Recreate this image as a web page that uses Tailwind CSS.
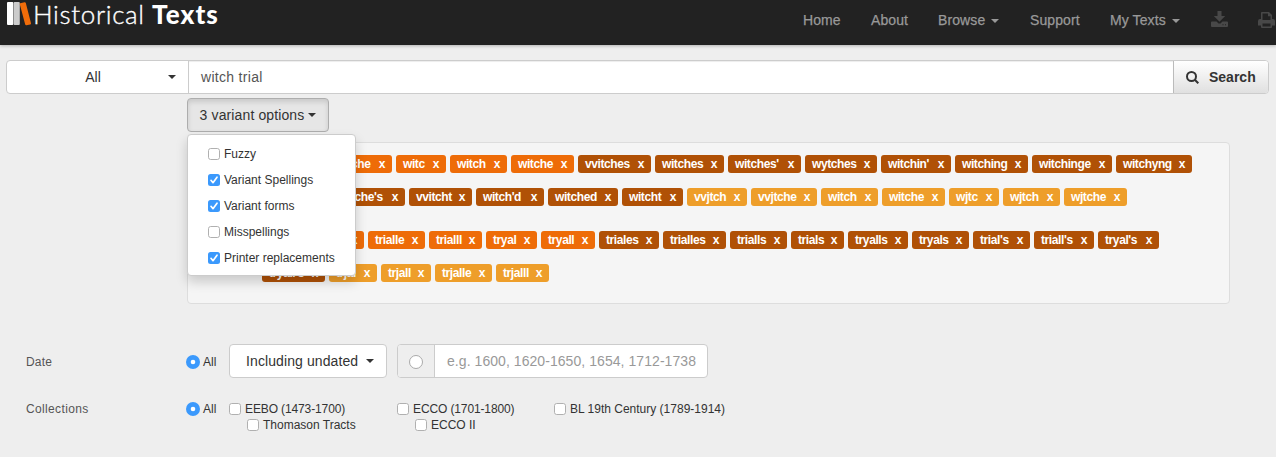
<!DOCTYPE html>
<html lang="en">
<head>
<meta charset="utf-8">
<title>Historical Texts</title>
<script src="https://cdn.jsdelivr.net/npm/@tailwindcss/browser@4"></script>
</head>
<body class="w-[1276px] h-[457px] overflow-hidden bg-[#eee] text-[#333] font-['Liberation_Sans',Arial,sans-serif] text-[12px] leading-[18px]">
<svg class="hidden">
  <symbol id="caret" viewBox="0 0 8 4"><path d="M0 0h8L4 4z" fill="currentColor"/></symbol>
  <symbol id="on" viewBox="0 0 12 12"><rect width="12" height="12" rx="2.5" fill="#3b99fc"/><path d="M3 6.3 5 8.7 9 3.2" fill="none" stroke="#fff" stroke-width="1.7" stroke-linecap="round" stroke-linejoin="round"/></symbol>
  <symbol id="off" viewBox="0 0 12 12"><rect x=".5" y=".5" width="11" height="11" rx="2.2" fill="#fff" stroke="#b0b0b0"/></symbol>
  <symbol id="radio" viewBox="0 0 14 14"><circle cx="7" cy="7" r="7" fill="#3b99fc"/><circle cx="7" cy="7" r="2.3" fill="#fff"/></symbol>
</svg>

<header class="h-[45px] bg-[#222] shadow-[0_1px_3px_rgba(0,0,0,0.25)] flex justify-between">
  <a class="flex items-start pl-[7px] text-white">
    <svg class="w-[25px] h-[24px] mt-[2px] shrink-0" viewBox="0 0 25 24"><rect width="6.3" height="23" rx="1" fill="#fff"/><rect x="6.6" width="6.2" height="23" rx="1" fill="#ccc"/><path d="M13.2 1.3 17.5.2Q18.5 0 18.8 1L24 21.3Q24.2 22.2 23.3 22.4L19.4 23.3Q18.5 23.4 18.2 22.5L12.8 2.2Q12.7 1.5 13.2 1.3Z" fill="#f06c0a"/></svg>
    <span class="flex pl-[1px] font-['Lato'] text-[26px] leading-[29px] whitespace-nowrap"><span class="w-[119px] font-light tracking-[0.65px] [-webkit-text-stroke:0.35px_white]">Historical</span><span class="font-black tracking-[1.1px]">Texts</span></span>
  </a>
  <nav class="flex items-start pt-[11px] text-[#999] text-[14px] leading-[18px] whitespace-nowrap tracking-[0.1px] [-webkit-text-stroke:0.25px_#999]">
    <a class="w-[68px]">Home</a>
    <a class="w-[67px]">About</a>
    <a class="w-[92px] flex items-center gap-[6px]">Browse <svg class="w-[8px] h-[4px] mt-px"><use href="#caret"/></svg></a>
    <a class="w-[80px]">Support</a>
    <a class="w-[101px] flex items-center gap-[6px]">My Texts <svg class="w-[8px] h-[4px] mt-px"><use href="#caret"/></svg></a>
    <svg class="w-[17px] h-[16px] mr-[30px]" viewBox="0 0 17 16" fill="#484848" stroke="none"><path d="M6.5 0h4v5h3.7L8.5 10.8 2.800 5h3.700z"/><path fill-rule="evenodd" d="M1 10.500h4.500l2 2h2l2-2H16q1 0 1 1V15q0 1-1 1H1q-1 0-1-1v-3.500q0-1 1-1zM11.500 13.200v1h1v-1zM14 13.200v1h1v-1z"/></svg>
    <svg class="w-[17px] h-[17px] mt-px mr-px" viewBox="0 0 17 17" fill="#484848"><path fill-rule="evenodd" d="M3 7V.8Q3 0 3.800 0H11l3 3v4h1q2 0 2 2v4.500h-3V15q0 1-1 1H4q-1 0-1-1v-1.500H0V9q0-2 2-2zM4.500 1.400V8h8V4.200H10V1.400zM4.500 11.500v3h8v-3z"/></svg>
  </nav>
</header>

<main>
  <form class="flex mt-[15px] ml-[6px] w-[1263px] h-[34px] border border-[#ccc] rounded-[4px] bg-white text-[14px] leading-[32px] overflow-hidden">
    <div class="w-[182px] border-r border-[#ccc] flex items-center pr-[12px]"><span class="flex-1 text-center pl-[11px]">All</span><svg class="w-[8px] h-[4px]"><use href="#caret"/></svg></div>
    <div class="flex-1 pl-[12px] text-[#555] tracking-[0.3px] shadow-[inset_0_1px_1px_rgba(0,0,0,0.075)]">witch trial</div>
    <button class="w-[95px] border-l border-[#bbb] bg-linear-to-b from-white to-[#e0e0e0] font-bold flex items-center pl-[12px] gap-[10px]"><svg class="w-[13px] h-[13px]" viewBox="0 0 13 13" fill="none" stroke="#333" stroke-width="2"><circle cx="5.500" cy="5.500" r="4.500"/><path d="m8.800 8.800 3.500 3.500"/></svg>Search</button>
  </form>

  <section class="relative ml-[187px] mt-[4px]">
    <button class="flex items-center justify-center gap-[4px] w-[142px] h-[34px] rounded-[4px] border border-[#adadad] bg-[#e6e6e6] shadow-[inset_0_3px_5px_rgba(0,0,0,0.125)] text-[14px] tracking-[0.12px] whitespace-nowrap">3 variant options <svg class="w-[8px] h-[4px]"><use href="#caret"/></svg></button>
    <div class="absolute z-10 left-0 top-[36px] w-[169px] h-[142px] bg-white border border-[#ccc] rounded-[4px] shadow-[0_6px_12px_rgba(0,0,0,0.175)] pl-[20px] pt-[6px] leading-[26px]">
      <label class="flex items-center gap-[4px]"><svg class="w-[12px] h-[12px]"><use href="#off"/></svg>Fuzzy</label>
      <label class="flex items-center gap-[4px]"><svg class="w-[12px] h-[12px]"><use href="#on"/></svg>Variant Spellings</label>
      <label class="flex items-center gap-[4px]"><svg class="w-[12px] h-[12px]"><use href="#on"/></svg>Variant forms</label>
      <label class="flex items-center gap-[4px]"><svg class="w-[12px] h-[12px]"><use href="#off"/></svg>Misspellings</label>
      <label class="flex items-center gap-[4px]"><svg class="w-[12px] h-[12px]"><use href="#on"/></svg>Printer replacements</label>
    </div>
    <div class="mt-[10px] w-[1043px] h-[162px] rounded-[4px] border border-[#ddd] bg-[#f5f5f5] pl-[74px] pt-[12px] text-white font-bold text-[12px] leading-[18px]" id="tags"></div>
  </section>

  <section class="flex items-center mt-[40px] pl-[26px] h-[34px]">
    <div class="w-[160px] text-[#555] tracking-[0.2px] pt-px">Date</div>
    <label class="w-[43px] flex items-center gap-[3px] pt-[2px]"><svg class="w-[14px] h-[14px]"><use href="#radio"/></svg>All</label>
    <div class="w-[158px] h-[34px] bg-white border border-[#ccc] rounded-[4px] flex items-center justify-between pl-[16px] pr-[12px] text-[14px] tracking-[0.1px]">Including undated<svg class="w-[8px] h-[4px]"><use href="#caret"/></svg></div>
    <div class="ml-[10px] w-[311px] h-[34px] flex border border-[#ccc] rounded-[4px] bg-white overflow-hidden text-[14px] leading-[32px] text-[#999]">
      <div class="w-[37px] bg-[#eee] border-r border-[#ccc] flex items-center pl-[11px] pt-[2px]"><span class="w-[14px] h-[14px] rounded-full bg-white border border-[#aaa]"></span></div>
      <span class="pl-[12px] tracking-[0.06px]">e.g. 1600, 1620-1650, 1654, 1712-1738</span>
    </div>
  </section>

  <section class="flex pl-[26px] mt-[22px] leading-[16px] whitespace-nowrap">
    <div class="w-[160px] text-[#555] tracking-[0.35px] pt-px">Collections</div>
    <label class="w-[43px] h-[18px] flex items-center gap-[3px]"><svg class="w-[14px] h-[14px]"><use href="#radio"/></svg>All</label>
    <div class="w-[168px] pt-px">
      <label class="flex items-center gap-[4px] tracking-[-0.12px]"><svg class="w-[12px] h-[12px]"><use href="#off"/></svg>EEBO (1473-1700)</label>
      <label class="flex items-center gap-[4px] pl-[18px]"><svg class="w-[12px] h-[12px]"><use href="#off"/></svg>Thomason Tracts</label>
    </div>
    <div class="w-[157px] pt-px">
      <label class="flex items-center gap-[4px] tracking-[-0.12px]"><svg class="w-[12px] h-[12px]"><use href="#off"/></svg>ECCO (1701-1800)</label>
      <label class="flex items-center gap-[4px] pl-[18px]"><svg class="w-[12px] h-[12px]"><use href="#off"/></svg>ECCO II</label>
    </div>
    <div class="pt-px">
      <label class="flex items-center gap-[4px]"><svg class="w-[12px] h-[12px]"><use href="#off"/></svg>BL 19th Century (1789-1914)</label>
    </div>
  </section>
</main>

<script>
const colours = { o: 'bg-[#ee6c08]', b: 'bg-[#b05106]', y: 'bg-[#ee9e2a]' };
const rows = [
  ['mb-[15px]', 'o vvitch 59|o vvitche 67|o witc 50|o witch 57|o witche 63|b vvitches 73|b witches 69|b witches\' 73|b wytches 72|b witchin\' 70|b witching 73|b witchinge 80|b witchyng 76'],
  ['mb-[25px]', 'b wytched 66|b witche\'s 73|b vvitcht 63|b witch\'d 68|b witched 70|b witcht 61|y vvjtch 60|y vvjtche 66|y witch 57|y witche 63|y wjtc 50|y wjtch 57|y wjtche 63'],
  ['mb-[15px]', 'o trial 47|o triall 51|o trialle 57|o trialll 53|o tryal 51|o tryall 54|b triales 60|b trialles 63|b trialls 57|b trials 53|b tryalls 60|b tryals 57|b trial\'s 57|b triall\'s 60|b tryal\'s 61'],
  ['mb-0', 'b tryall\'s 63|y trjal 48|y trjall 50|y trjalle 57|y trjalll 53'],
];
for (const [margin, list] of rows) {
  const row = document.createElement('div');
  row.className = 'flex gap-[4px] ' + margin;
  for (const item of list.split('|')) {
    const [c, word, width] = item.split(' ');
    const tag = document.createElement('span');
    tag.className = 'flex justify-between h-[18px] rounded-[3px] px-[7px] whitespace-nowrap shrink-0 tracking-[-0.4px] ' + colours[c];
    tag.style.width = width + 'px';
    const name = document.createElement('span');
    name.textContent = word;
    const close = document.createElement('span');
    close.textContent = 'x';
    tag.append(name, close);
    row.append(tag);
  }
  document.getElementById('tags').append(row);
}
</script>
</body>
</html>
